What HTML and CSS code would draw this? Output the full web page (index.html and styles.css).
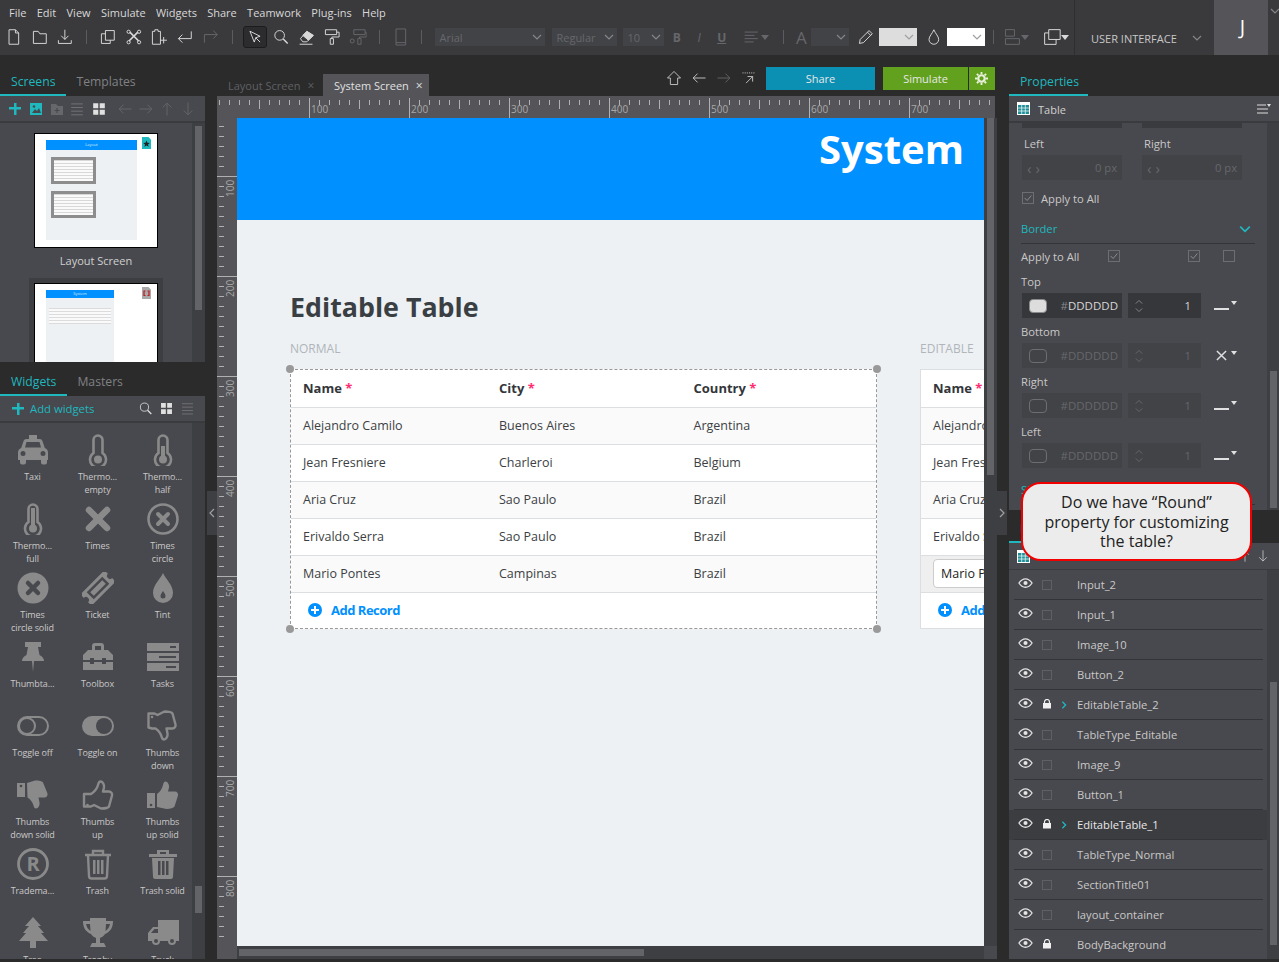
FILE: index.html
```html
<!DOCTYPE html>
<html lang="en">
<head>
    <meta charset="UTF-8">
    <title>System Screen</title>
    <link rel="stylesheet" href="styles.css">
</head>
<body>
<svg class="sprite" xmlns="http://www.w3.org/2000/svg">
    <!-- toolbar icons -->
    <symbol id="t-new" viewBox="0 0 22 22"><path d="M5 2h8l4 4v14H5zM13 2v4h4"/></symbol>
    <symbol id="t-open" viewBox="0 0 22 22"><path d="M3 4h6l2 3h8v12H3z"/></symbol>
    <symbol id="t-save" viewBox="0 0 22 22"><path d="M11 2v12M6.500 9.500l4.500 4.500 4.500-4.500M3 15v4h16v-4"/></symbol>
    <symbol id="t-copy" viewBox="0 0 22 22"><path d="M8 3h11v12H8zM8 7H3v12h11v-4"/></symbol>
    <symbol id="t-cut" viewBox="0 0 22 22"><path d="M6 5l11 11M16 5L5 16" stroke-width="2"/><circle cx="4.500" cy="4.500" r="2"/><circle cx="17.500" cy="4.500" r="2"/><circle cx="4.500" cy="17.500" r="2"/><circle cx="17.500" cy="17.500" r="2"/></symbol>
    <symbol id="t-paste" viewBox="0 0 22 22"><path d="M3 4h3V2h4v2h3v16H3zM13 15h8M17 11v8"/></symbol>
    <symbol id="t-undo" viewBox="0 0 22 22"><path d="M19 4v9H3M8 8l-5 5 5 5"/></symbol>
    <symbol id="t-redo" viewBox="0 0 22 22"><path d="M3 18V8h16M14 3l5 5-5 5"/></symbol>
    <symbol id="t-pointer" viewBox="0 0 22 22"><path d="M4 3l14 7-6 2-2 6zM12 12l6 6"/></symbol>
    <symbol id="t-search" viewBox="0 0 22 22"><circle cx="9.500" cy="9" r="6"/><path d="M14 13.500l5.500 5.500" stroke-width="1.800"/></symbol>
    <symbol id="t-eraser" viewBox="0 0 22 22"><path d="M3 13l8-9 8 5-8 8H6zM2 20h16"/><path d="M11 4l8 5-6 6-7-6z" fill="currentColor"/></symbol>
    <symbol id="t-roller" viewBox="0 0 22 22"><path d="M3 2h14v6H3zM17 5h3v6h-9v2M9 13h4v7H9z"/></symbol>
    <symbol id="t-roller-gear" viewBox="0 0 22 22"><path d="M6 2h14v6H6zM20 5h1.500v6H13v2M11 13h4v7h-4z"/><circle cx="4" cy="16" r="2.500"/></symbol>
    <symbol id="t-device" viewBox="0 0 22 22"><path d="M5 1h12v20H5zM5 18h12"/></symbol>
    <symbol id="t-align" viewBox="0 0 22 22"><path d="M2 5h16M2 9h12M2 13h16M2 17h11"/></symbol>
    <symbol id="t-pen" viewBox="0 0 22 22"><path d="M3 19l1-5L15 3l4 4L8 18zM13 5l4 4"/></symbol>
    <symbol id="t-drop" viewBox="0 0 22 22"><path d="M11 2c2 5 6 8 6 12a6 6 0 0 1-12 0c0-4 4-7 6-12z"/></symbol>
    <symbol id="t-dist" viewBox="0 0 22 22"><path d="M3 2h11v8H3zM3 13h17v7H3z"/></symbol>
    <symbol id="t-layers" viewBox="0 0 22 22"><path d="M7 2h14v12H7zM7 6H2v14h14v-6"/></symbol>
    <symbol id="t-home" viewBox="0 0 22 22"><path d="M11 2l9 9h-4v9H6v-9H2z"/></symbol>
    <symbol id="t-back" viewBox="0 0 22 22"><path d="M20 11H3M9 5l-6 6 6 6"/></symbol>
    <symbol id="t-forward" viewBox="0 0 22 22"><path d="M2 11h17M13 5l6 6-6 6"/></symbol>
    <symbol id="t-up" viewBox="0 0 22 22"><path d="M11 20V3M5 9l6-6 6 6"/></symbol>
    <symbol id="t-down" viewBox="0 0 22 22"><path d="M11 2v17M5 13l6 6 6-6"/></symbol>
    <symbol id="t-exit" viewBox="0 0 22 22"><path d="M2 4h18" stroke-dasharray="1.500 1.500"/><path d="M7 18l9-9M9 9h7v7"/></symbol>
    <symbol id="t-list" viewBox="0 0 22 22"><path d="M3 4h16M3 9h16M3 14h16M3 19h16"/></symbol>
    <symbol id="t-grid" viewBox="0 0 22 22"><path d="M3 3h7v7H3zM12 3h7v7h-7zM3 12h7v7H3zM12 12h7v7h-7z" fill="currentColor" stroke="none"/></symbol>
    <symbol id="t-chevron" viewBox="0 0 10 10"><path d="M1 3l4 4 4-4"/></symbol>
    <symbol id="t-check" viewBox="0 0 12 12"><path d="M2 6l3 3 5-6"/></symbol>
    <symbol id="t-table" viewBox="0 0 13 13"><path d="M0 0h13v13H0z" fill="#fff" stroke="none"/><path d="M1 3h11v9H1z" fill="#1e8f98" stroke="none"/><path d="M1 6h11M1 9h11M4.700 3v9M8.300 3v9" stroke="#fff" stroke-width=".7"/></symbol>
    <symbol id="t-eye" viewBox="0 0 16 12"><path d="M1 6c2-3 4.500-4.500 7-4.500S13 3 15 6c-2 3-4.500 4.500-7 4.500S3 9 1 6z" stroke-width="1.400"/><circle cx="8" cy="6" r="2.200" fill="currentColor" stroke="none"/></symbol>
    <symbol id="t-lock" viewBox="0 0 10 10"><path d="M2.500 4V3a2.500 2.500 0 0 1 5 0v1" stroke-width="1.200"/><path d="M1 4h8v5.500H1z" fill="currentColor" stroke="none"/></symbol>

    <!-- widget icons, drawn solid -->
    <symbol id="w-taxi" viewBox="0 0 32 32"><path fill-rule="evenodd" d="M12 1h8v4h2.500c1.500 0 2.600.9 3 2.200L27.800 14c2 .8 3.200 2.400 3.200 4.500V26h-1v2.500a2 2 0 0 1-2 2h-2a2 2 0 0 1-2-2V26H9v2.500a2 2 0 0 1-2 2H5a2 2 0 0 1-2-2V26H1v-7.500C1 16.400 2.200 14.800 4.200 14L6.500 7.200C7 5.900 8 5 9.500 5H12zM9.500 8L8 13.500h16L22.500 8zM6 17a2.500 2.500 0 1 0 0 5 2.500 2.500 0 0 0 0-5zm20 0a2.500 2.500 0 1 0 0 5 2.500 2.500 0 0 0 0-5z"/></symbol>
    <symbol id="w-thermo" viewBox="0 0 32 32"><path d="M11.500 19V6a4.500 4.500 0 0 1 9 0v13a8 8 0 1 1-9 0z" fill="none" stroke="currentColor" stroke-width="2.600"/><circle cx="16" cy="25.500" r="4"/></symbol>
    <symbol id="w-thermo-half" viewBox="0 0 32 32"><path d="M11.500 19V6a4.500 4.500 0 0 1 9 0v13a8 8 0 1 1-9 0z" fill="none" stroke="currentColor" stroke-width="2.600"/><circle cx="16" cy="25.500" r="4"/><path d="M14 12h4v12h-4z"/></symbol>
    <symbol id="w-thermo-full" viewBox="0 0 32 32"><path d="M11.500 19V6a4.500 4.500 0 0 1 9 0v13a8 8 0 1 1-9 0z" fill="none" stroke="currentColor" stroke-width="2.600"/><circle cx="16" cy="25.500" r="4"/><path d="M14 5h4v19h-4z"/></symbol>
    <symbol id="w-times" viewBox="0 0 32 32"><path d="M7 7l18 18M25 7L7 25" fill="none" stroke="currentColor" stroke-width="6.500" stroke-linecap="round"/></symbol>
    <symbol id="w-times-circle" viewBox="0 0 32 32"><circle cx="16" cy="16" r="14.500" fill="none" stroke="currentColor" stroke-width="2.600"/><path d="M11 11l10 10M21 11L11 21" fill="none" stroke="currentColor" stroke-width="4" stroke-linecap="round"/></symbol>
    <symbol id="w-times-solid" viewBox="0 0 32 32"><circle cx="16" cy="16" r="15.500"/><path d="M11 11l10 10M21 11L11 21" fill="none" stroke="#48494e" stroke-width="4.500" stroke-linecap="round"/></symbol>
    <symbol id="w-ticket" viewBox="0 0 32 32"><g transform="rotate(-45 16 16)"><path fill-rule="evenodd" d="M-1 8h34v5a3 3 0 0 0 0 6v5H-1v-5a3 3 0 0 0 0-6zM5 11v10h22V11z"/><path d="M7.500 13.500h17v5h-17z"/></g></symbol>
    <symbol id="w-tint" viewBox="0 0 32 32"><path d="M16 1c3 6.500 10 12 10 20a10 10 0 0 1-20 0C6 13 13 7.500 16 1z"/><path d="M16 19c1 2 2.500 3 2.500 5a2.500 2.500 0 0 1-5 0c0-2 1.500-3 2.500-5z" fill="#48494e"/></symbol>
    <symbol id="w-thumbtack" viewBox="0 0 32 32"><path d="M8 1h16v5h-3l1.500 8c3 1.500 4.500 3.500 4.500 6H17l-1 11-1-11H5c0-2.500 1.500-4.500 4.500-6L11 6H8z"/></symbol>
    <symbol id="w-toolbox" viewBox="0 0 32 32"><path fill-rule="evenodd" d="M10 9V5a3 3 0 0 1 3-3h6a3 3 0 0 1 3 3v4h4l5 5v5h-7v-2h-4v2h-8v-2H8v2H1v-5l5-5zm3 0h6V5h-6zM1 21h7v2h4v-2h8v2h4v-2h7v8H1z"/></symbol>
    <symbol id="w-tasks" viewBox="0 0 32 32"><path fill-rule="evenodd" d="M0 2h32v8H0zM23 5v2h6V5zM0 12h32v8H0zM12 15v2h17v-2zM0 22h32v8H0zM19 25v2h10v-2z"/></symbol>
    <symbol id="w-toggle-off" viewBox="0 0 32 32"><rect x="1" y="7" width="30" height="18" rx="9" fill="none" stroke="currentColor" stroke-width="2"/><circle cx="10" cy="16" r="8" fill="none" stroke="currentColor" stroke-width="2"/></symbol>
    <symbol id="w-toggle-on" viewBox="0 0 32 32"><rect x="0" y="6" width="32" height="20" rx="10"/><circle cx="22" cy="16" r="8" fill="#48494e"/></symbol>
    <symbol id="w-thumb-down" viewBox="0 0 32 32"><path d="M1.500 3.500h6l3 1.500 7-3.500c4 0 7 .5 8 2l3 11c.5 2-1 4-3 4h-6l1 5c.500 3-1.500 6-3.500 6-1.500 0-2-1-2.500-3-1-3.500-3-6-6-8H5l-3.500-1z" fill="none" stroke="currentColor" stroke-width="2.400" stroke-linejoin="round"/><circle cx="5" cy="7" r="1.300"/></symbol>
    <symbol id="w-thumb-down-solid" viewBox="0 0 32 32"><path d="M0 4h8v14H0zM10 4l8-2.500c4 0 7 .5 8 2l4.500 11c.5 2-1 4-3 4h-6l1 5c.500 3-1.500 6-3.500 6-1.500 0-2-1-2.500-3-1-3.500-3-6-6-8z"/><circle cx="4" cy="7" r="1.300" fill="#48494e"/></symbol>
    <symbol id="w-thumb-up" viewBox="0 0 32 32"><path d="M2 15h7c3-2 6-5 7-9 .5-2 1-3.500 2.500-3.500 2 0 4 3 3.500 6l-1 4h6c2 0 3.500 2 3 4l-3 11c-1 1.500-4 2-8 2l-7-3.500-3 1.500H2z" fill="none" stroke="currentColor" stroke-width="2.400" stroke-linejoin="round"/><circle cx="5.500" cy="26" r="1.300"/></symbol>
    <symbol id="w-thumb-up-solid" viewBox="0 0 32 32"><path d="M0 14h8v15H0zM10 15c3-2 5-5 6-9 .5-2 1-3.500 2.500-3.500 2 0 4 3 3.500 6l-1 4h7c2 0 3.500 2 3 4l-3.500 11c-1 1.500-4 2.500-8 2.500L10 28z"/><circle cx="4" cy="26" r="1.300" fill="#48494e"/></symbol>
    <symbol id="w-trademark" viewBox="0 0 32 32"><circle cx="16" cy="16" r="14.500" fill="none" stroke="currentColor" stroke-width="2.800"/><text x="16" y="23" text-anchor="middle" font-family="Open Sans" font-weight="700" font-size="20">R</text></symbol>
    <symbol id="w-trash" viewBox="0 0 32 32"><path d="M3 7h26M11 7V3h10v4M6 7l1 21c0 1.500 1 2.500 2.500 2.500h13c1.500 0 2.500-1 2.500-2.500l1-21" fill="none" stroke="currentColor" stroke-width="2.400"/><path d="M11 12h2.500v14H11zM15 12h2.500v14H15zM19 12h2.500v14H19z"/></symbol>
    <symbol id="w-trash-solid" viewBox="0 0 32 32"><path d="M2 6h8V2h12v4h8v3H2zM13 4v2h6V4z"/><path fill-rule="evenodd" d="M5 10h22l-1 19c0 1-1 2-2 2H8c-1 0-2-1-2-2zM11 13v14h2.500V13zM15 13v14h2.500V13zM19 13v14h2.500V13z"/></symbol>
    <symbol id="w-tree" viewBox="0 0 32 32"><path d="M16 0l8 9h-3l6 7h-3l7 8H19v7h-6v-7H2l7-8H6l6-7H8z"/></symbol>
    <symbol id="w-trophy" viewBox="0 0 32 32"><path d="M8 1h16v3h7c0 7-3 11-8 13-1 2-3 3-5 4v5h4l2 4H8l2-4h4v-5c-2-1-4-2-5-4C4 15 1 11 1 4h7zM4 7c.5 3 2 5 4.500 7L8 7zm24 0h-4l-.500 7c2.500-2 4-4 4.500-7z"/></symbol>
    <symbol id="w-truck" viewBox="0 0 32 32"><path fill-rule="evenodd" d="M11 3h21v21h-3a4 4 0 0 1-8 0h-8a4 4 0 0 1-8 0H1v-8l5-6h5zM4 16h7v-4H7.500zM9 22a2 2 0 1 0 0 4 2 2 0 0 0 0-4zm16 0a2 2 0 1 0 0 4 2 2 0 0 0 0-4z"/></symbol>
</svg>

<header class="topbar">
    <div class="topbar-main">
        <nav class="menu">
            <span>File</span><span>Edit</span><span>View</span><span>Simulate</span><span>Widgets</span><span>Share</span><span>Teamwork</span><span>Plug-ins</span><span>Help</span>
        </nav>
        <div class="tools">
            <svg class="tool"><use href="#t-new"/></svg>
            <svg class="tool"><use href="#t-open"/></svg>
            <svg class="tool"><use href="#t-save"/></svg>
            <i class="sep"></i>
            <svg class="tool"><use href="#t-copy"/></svg>
            <svg class="tool"><use href="#t-cut"/></svg>
            <svg class="tool"><use href="#t-paste"/></svg>
            <svg class="tool"><use href="#t-undo"/></svg>
            <svg class="tool off"><use href="#t-redo"/></svg>
            <i class="sep"></i>
            <svg class="tool active"><use href="#t-pointer"/></svg>
            <svg class="tool"><use href="#t-search"/></svg>
            <svg class="tool"><use href="#t-eraser"/></svg>
            <svg class="tool"><use href="#t-roller"/></svg>
            <svg class="tool off"><use href="#t-roller-gear"/></svg>
            <i class="sep"></i>
            <svg class="tool off"><use href="#t-device"/></svg>
            <i class="sep"></i>
            <div class="select select-font">Arial<svg class="chev"><use href="#t-chevron"/></svg></div>
            <div class="select select-weight">Regular<svg class="chev"><use href="#t-chevron"/></svg></div>
            <div class="select select-size">10<svg class="chev"><use href="#t-chevron"/></svg></div>
            <b class="fmt fmt-b">B</b>
            <em class="fmt">I</em>
            <u class="fmt">U</u>
            <svg class="tool off tool-narrow tool-align"><use href="#t-align"/></svg><i class="caret off caret-align"></i>
            <i class="sep"></i>
            <span class="big-a">A</span>
            <div class="select select-num"><svg class="chev"><use href="#t-chevron"/></svg></div>
            <svg class="tool tool-pen"><use href="#t-pen"/></svg>
            <div class="select swatch swatch-grey"><svg class="chev"><use href="#t-chevron"/></svg></div>
            <svg class="tool tool-drop"><use href="#t-drop"/></svg>
            <div class="select swatch swatch-white"><svg class="chev"><use href="#t-chevron"/></svg></div>
            <i class="sep"></i>
            <svg class="tool off tool-narrow"><use href="#t-dist"/></svg><i class="caret off"></i>
            <svg class="tool tool-narrow tool-layers"><use href="#t-layers"/></svg><i class="caret"></i>
        </div>
    </div>
    <div class="project">USER INTERFACE<svg class="chev"><use href="#t-chevron"/></svg></div>
    <div class="avatar">J</div>
    <svg class="chev account-chev"><use href="#t-chevron"/></svg>
</header>

<main class="workspace">
    <!-- left column -->
    <aside class="left">
        <div class="tabs">
            <span class="tab on">Screens</span><span class="tab">Templates</span>
        </div>
        <section class="panel screens">
            <div class="panel-bar">
                <svg class="bar-icon teal img-icon" viewBox="0 0 14 14"><path d="M1 1h12v12H1z"/><path d="M3 11l3-4 2 2 2-3 2 5z" fill="#48494e"/><circle cx="5" cy="4.500" r="1.300" fill="#48494e"/></svg>
                <svg class="bar-icon dim-fill" viewBox="0 0 14 14"><path d="M1 2h5l2 2h5v9H1z"/><path d="M7 6v5M4.500 8.500h5" stroke="#48494e" fill="none"/></svg>
                <svg class="bar-icon-line dim"><use href="#t-list"/></svg>
                <svg class="bar-icon-line light"><use href="#t-grid"/></svg>
                <svg class="bar-arrow first-arrow"><use href="#t-back"/></svg>
                <svg class="bar-arrow"><use href="#t-forward"/></svg>
                <svg class="bar-arrow"><use href="#t-up"/></svg>
                <svg class="bar-arrow"><use href="#t-down"/></svg>
            </div>
            <div class="panel-scroll">
                <div class="screen-list">
                    <div class="screen-item">
                        <div class="thumb">
                            <div class="mini-page mini-layout">
                                <div class="mini-head">Layout</div>
                                <div class="mini-box"></div>
                                <div class="mini-box"></div>
                            </div>
                            <svg class="badge" viewBox="0 0 9 12"><path d="M0 0h6.500L9 2.500V12H0z" fill="#1fb8bf"/><path d="M4.500 3.500l1 2.300 2.300.2-1.800 1.500.6 2.300-2.100-1.300-2.100 1.300.6-2.300L1.200 6l2.300-.2z" fill="#222"/></svg>
                        </div>
                        <div class="screen-name">Layout Screen</div>
                    </div>
                    <div class="screen-item current">
                        <div class="thumb">
                            <div class="mini-page mini-system">
                                <div class="mini-head">System</div>
                                <div class="mini-table"></div>
                            </div>
                            <svg class="badge" viewBox="0 0 9 12"><path d="M0 0h6.500L9 2.500V12H0z" fill="#a9a9a9"/><path d="M3.500 4H2v4.500h1.500M5.500 4H7v4.500H5.500" fill="none" stroke="#c2181f"/></svg>
                        </div>
                    </div>
                </div>
                <div class="track"><div class="thumb-bar screens-bar"></div></div>
            </div>
        </section>
        <div class="tabs">
            <span class="tab on">Widgets</span><span class="tab">Masters</span>
        </div>
        <section class="panel widgets">
            <div class="panel-bar widgets-bar">
                <span class="add-label">Add widgets</span>
                <svg class="bar-icon-line light"><use href="#t-search"/></svg>
                <svg class="bar-icon-line light"><use href="#t-grid"/></svg>
                <svg class="bar-icon-line dim"><use href="#t-list"/></svg>
            </div>
            <div class="panel-scroll">
                <div class="widget-grid">
                    <div class="widget"><svg><use href="#w-taxi"/></svg><span>Taxi</span></div>
                    <div class="widget"><svg><use href="#w-thermo"/></svg><span>Thermo...<br>empty</span></div>
                    <div class="widget"><svg><use href="#w-thermo-half"/></svg><span>Thermo...<br>half</span></div>
                    <div class="widget"><svg><use href="#w-thermo-full"/></svg><span>Thermo...<br>full</span></div>
                    <div class="widget"><svg><use href="#w-times"/></svg><span>Times</span></div>
                    <div class="widget"><svg><use href="#w-times-circle"/></svg><span>Times<br>circle</span></div>
                    <div class="widget"><svg><use href="#w-times-solid"/></svg><span>Times<br>circle solid</span></div>
                    <div class="widget"><svg><use href="#w-ticket"/></svg><span>Ticket</span></div>
                    <div class="widget"><svg><use href="#w-tint"/></svg><span>Tint</span></div>
                    <div class="widget"><svg><use href="#w-thumbtack"/></svg><span>Thumbta...</span></div>
                    <div class="widget"><svg><use href="#w-toolbox"/></svg><span>Toolbox</span></div>
                    <div class="widget"><svg><use href="#w-tasks"/></svg><span>Tasks</span></div>
                    <div class="widget"><svg><use href="#w-toggle-off"/></svg><span>Toggle off</span></div>
                    <div class="widget"><svg><use href="#w-toggle-on"/></svg><span>Toggle on</span></div>
                    <div class="widget"><svg><use href="#w-thumb-down"/></svg><span>Thumbs<br>down</span></div>
                    <div class="widget"><svg><use href="#w-thumb-down-solid"/></svg><span>Thumbs<br>down solid</span></div>
                    <div class="widget"><svg><use href="#w-thumb-up"/></svg><span>Thumbs<br>up</span></div>
                    <div class="widget"><svg><use href="#w-thumb-up-solid"/></svg><span>Thumbs<br>up solid</span></div>
                    <div class="widget"><svg><use href="#w-trademark"/></svg><span>Tradema...</span></div>
                    <div class="widget"><svg><use href="#w-trash"/></svg><span>Trash</span></div>
                    <div class="widget"><svg><use href="#w-trash-solid"/></svg><span>Trash solid</span></div>
                    <div class="widget"><svg><use href="#w-tree"/></svg><span>Tree</span></div>
                    <div class="widget"><svg><use href="#w-trophy"/></svg><span>Trophy</span></div>
                    <div class="widget"><svg><use href="#w-truck"/></svg><span>Truck</span></div>
                </div>
                <div class="track"><div class="thumb-bar widgets-thumb"></div></div>
            </div>
        </section>
    </aside>

    <!-- center column -->
    <section class="center">
        <div class="center-top">
            <div class="doc-tab">Layout Screen<span class="x">×</span></div>
            <div class="doc-tab on">System Screen<span class="x">×</span></div>
            <div class="nav-icons">
                <svg class="nav-icon"><use href="#t-home"/></svg>
                <svg class="nav-icon"><use href="#t-back"/></svg>
                <svg class="nav-icon off"><use href="#t-forward"/></svg>
                <svg class="nav-icon"><use href="#t-exit"/></svg>
            </div>
            <div class="btn btn-share">Share</div>
            <div class="btn btn-sim">Simulate</div>
            <div class="btn btn-gear">
                <svg viewBox="0 0 14 14"><circle cx="7" cy="7" r="3.500" fill="none" stroke="#e8f0dc" stroke-width="2.400"/><path d="M7 0v14M0 7h14M2 2l10 10M12 2L2 12" stroke="#e8f0dc" stroke-width="2" stroke-dasharray="2.400 9.200 2.400 0"/></svg>
            </div>
        </div>
        <div class="ruler-x">
            <span>100</span><span>200</span><span>300</span><span>400</span><span>500</span><span>600</span><span>700</span>
        </div>
        <div class="stage">
            <div class="ruler-y">
                <span>100</span><span>200</span><span>300</span><span>400</span><span>500</span><span>600</span><span>700</span><span>800</span>
            </div>
            <div class="canvas">
                <div class="page-head">System</div>
                <h1>Editable Table</h1>
                <div class="tables">
                    <div class="table-block">
                        <div class="caption">NORMAL</div>
                        <div class="table-wrap selected">
                            <table>
                                <thead><tr><th>Name <em>*</em></th><th>City <em>*</em></th><th>Country <em>*</em></th></tr></thead>
                                <tbody>
                                    <tr><td>Alejandro Camilo</td><td>Buenos Aires</td><td>Argentina</td></tr>
                                    <tr><td>Jean Fresniere</td><td>Charleroi</td><td>Belgium</td></tr>
                                    <tr><td>Aria Cruz</td><td>Sao Paulo</td><td>Brazil</td></tr>
                                    <tr><td>Erivaldo Serra</td><td>Sao Paulo</td><td>Brazil</td></tr>
                                    <tr><td>Mario Pontes</td><td>Campinas</td><td>Brazil</td></tr>
                                    <tr class="add-row"><td colspan="3"><span class="add-record"><i class="add-dot"></i>Add Record</span></td></tr>
                                </tbody>
                            </table>
                            <i class="handle tl"></i><i class="handle tr"></i><i class="handle bl"></i><i class="handle br"></i>
                        </div>
                    </div>
                    <div class="table-block">
                        <div class="caption">EDITABLE</div>
                        <div class="table-wrap editable">
                            <table>
                                <thead><tr><th>Name <em>*</em></th><th>City <em>*</em></th><th>Country <em>*</em></th></tr></thead>
                                <tbody>
                                    <tr><td>Alejandro Camilo</td><td>Buenos Aires</td><td>Argentina</td></tr>
                                    <tr><td>Jean Fresniere</td><td>Charleroi</td><td>Belgium</td></tr>
                                    <tr><td>Aria Cruz</td><td>Sao Paulo</td><td>Brazil</td></tr>
                                    <tr><td>Erivaldo Serra</td><td>Sao Paulo</td><td>Brazil</td></tr>
                                    <tr class="edit-row"><td><span class="edit-input">Mario Pontes</span></td><td>Campinas</td><td>Brazil</td></tr>
                                    <tr class="add-row"><td colspan="3"><span class="add-record"><i class="add-dot"></i>Add Record</span></td></tr>
                                </tbody>
                            </table>
                        </div>
                    </div>
                </div>
            </div>
            <div class="track track-main"><div class="thumb-bar main-bar"></div></div>
        </div>
        <div class="hscroll">
            <div class="ruler-y-end"></div>
            <div class="hscroll-track"><div class="hscroll-thumb"></div></div>
            <div class="hscroll-corner"></div>
        </div>
    </section>

    <!-- right column -->
    <aside class="right">
        <div class="tabs">
            <span class="tab on wide">Properties</span>
        </div>
        <section class="panel props">
            <div class="panel-bar title-bar">
                <svg class="table-icon"><use href="#t-table"/></svg>
                <span class="title">Table</span>
                <svg class="menu-icon" viewBox="0 0 14 10"><path d="M0 1h9M0 5h11M0 9h11" stroke="#ddd" stroke-width="1.200"/><path d="M10 0h4l-2 3z" fill="#ddd" stroke="none"/></svg>
            </div>
            <div class="panel-scroll">
                <div class="prop-body">
                    <div class="two-up stubs"><i></i><i></i></div>
                    <div class="two-up labels"><span>Left</span><span>Right</span></div>
                    <div class="two-up">
                        <div class="px-input"><span class="carets">‹ ›</span><span>0 px</span></div>
                        <div class="px-input"><span class="carets">‹ ›</span><span>0 px</span></div>
                    </div>
                    <label class="apply"><svg class="check"><use href="#t-check"/></svg>Apply to All</label>
                    <div class="group-head">Border<svg class="chev teal-chev"><use href="#t-chevron"/></svg></div>
                    <div class="apply-row">
                        <span>Apply to All</span>
                        <svg class="check c1"><use href="#t-check"/></svg>
                        <svg class="check c2"><use href="#t-check"/></svg>
                        <span class="check c3"></span>
                    </div>
                    <div class="side">
                        <div class="side-label">Top</div>
                        <div class="side-row">
                            <div class="hex"><i class="dot"></i><span><s>#</s>DDDDDD</span></div>
                            <div class="stepper"><span class="spin"><svg class="chev up"><use href="#t-chevron"/></svg><svg class="chev"><use href="#t-chevron"/></svg></span><span>1</span></div>
                            <div class="line-style"><i></i><b></b></div>
                        </div>
                    </div>
                    <div class="side disabled">
                        <div class="side-label">Bottom</div>
                        <div class="side-row">
                            <div class="hex"><i class="dot"></i><span><s>#</s>DDDDDD</span></div>
                            <div class="stepper"><span class="spin"><svg class="chev up"><use href="#t-chevron"/></svg><svg class="chev"><use href="#t-chevron"/></svg></span><span>1</span></div>
                            <div class="line-style"><svg class="no-line" viewBox="0 0 12 12"><path d="M1 1l10 10M11 1L1 11"/></svg><b></b></div>
                        </div>
                    </div>
                    <div class="side disabled">
                        <div class="side-label">Right</div>
                        <div class="side-row">
                            <div class="hex"><i class="dot"></i><span><s>#</s>DDDDDD</span></div>
                            <div class="stepper"><span class="spin"><svg class="chev up"><use href="#t-chevron"/></svg><svg class="chev"><use href="#t-chevron"/></svg></span><span>1</span></div>
                            <div class="line-style"><i></i><b></b></div>
                        </div>
                    </div>
                    <div class="side disabled">
                        <div class="side-label">Left</div>
                        <div class="side-row">
                            <div class="hex"><i class="dot"></i><span><s>#</s>DDDDDD</span></div>
                            <div class="stepper"><span class="spin"><svg class="chev up"><use href="#t-chevron"/></svg><svg class="chev"><use href="#t-chevron"/></svg></span><span>1</span></div>
                            <div class="line-style"><i></i><b></b></div>
                        </div>
                    </div>
                    <div class="group-head shadow-head">Shadow</div>
                </div>
                <div class="track"><div class="thumb-bar props-bar"></div></div>
            </div>
        </section>
        <div class="tabs layers-tabs">
            <span class="tab on wide">Layers</span>
        </div>
        <section class="panel layers">
            <div class="panel-bar title-bar layers-title">
                <svg class="table-icon"><use href="#t-table"/></svg>
                <span class="title">Table</span>
                <svg class="small-arrow"><use href="#t-up"/></svg>
                <svg class="small-arrow"><use href="#t-down"/></svg>
            </div>
            <div class="panel-scroll">
                <ul class="layer-list">
                    <li><svg class="eye"><use href="#t-eye"/></svg><i class="box"></i><i class="exp"></i>Input_2</li>
                    <li><svg class="eye"><use href="#t-eye"/></svg><i class="box"></i><i class="exp"></i>Input_1</li>
                    <li><svg class="eye"><use href="#t-eye"/></svg><i class="box"></i><i class="exp"></i>Image_10</li>
                    <li><svg class="eye"><use href="#t-eye"/></svg><i class="box"></i><i class="exp"></i>Button_2</li>
                    <li><svg class="eye"><use href="#t-eye"/></svg><svg class="lock"><use href="#t-lock"/></svg><svg class="exp arrow" viewBox="0 0 10 10"><path d="M3 1l4 4-4 4"/></svg>EditableTable_2</li>
                    <li><svg class="eye"><use href="#t-eye"/></svg><i class="box"></i><i class="exp"></i>TableType_Editable</li>
                    <li><svg class="eye"><use href="#t-eye"/></svg><i class="box"></i><i class="exp"></i>Image_9</li>
                    <li><svg class="eye"><use href="#t-eye"/></svg><i class="box"></i><i class="exp"></i>Button_1</li>
                    <li class="picked"><svg class="eye"><use href="#t-eye"/></svg><svg class="lock"><use href="#t-lock"/></svg><svg class="exp arrow" viewBox="0 0 10 10"><path d="M3 1l4 4-4 4"/></svg>EditableTable_1</li>
                    <li><svg class="eye"><use href="#t-eye"/></svg><i class="box"></i><i class="exp"></i>TableType_Normal</li>
                    <li><svg class="eye"><use href="#t-eye"/></svg><i class="box"></i><i class="exp"></i>SectionTitle01</li>
                    <li><svg class="eye"><use href="#t-eye"/></svg><i class="box"></i><i class="exp"></i>layout_container</li>
                    <li><svg class="eye"><use href="#t-eye"/></svg><svg class="lock"><use href="#t-lock"/></svg><i class="exp"></i>BodyBackground</li>
                </ul>
                <div class="track"><div class="thumb-bar layers-bar"></div></div>
            </div>
        </section>
    </aside>

    <!-- collapse handles and comment sit over the columns -->
    <div class="collapse collapse-left"><svg class="chev-side" viewBox="0 0 10 10"><path d="M7 1L3 5l4 4"/></svg></div>
    <div class="collapse collapse-right"><svg class="chev-side" viewBox="0 0 10 10"><path d="M3 1l4 4-4 4"/></svg></div>
    <div class="comment">Do we have “Round” property for customizing the table?</div>
</main>
</body>
</html>
```

FILE: styles.css
```css
* {
    box-sizing: border-box;
}

html, body {
    margin: 0;
    height: 100%;
}

body {
    width: 1279px;
    height: 962px;
    overflow: hidden;
    background: #2b2b2b;
    color: #d0d0d0;
    font-family: "Open Sans", sans-serif;
    font-size: 11px;
    display: flex;
    flex-direction: column;
}

.sprite {
    display: none;
}

svg {
    fill: none;
    stroke: currentColor;
    stroke-width: 1.2;
    display: block;
}

.chev {
    width: 10px;
    height: 10px;
    color: #85868a;
    flex: none;
}

/* top bar */
.topbar {
    height: 55px;
    flex: none;
    background: #3a3a3d;
    display: flex;
}

.topbar-main {
    width: 1075px;
    flex: none;
    border-right: 1px solid #2e2e30;
}

.menu {
    display: flex;
    gap: 10.300px;
    height: 25px;
    padding: 5px 0 0 9px;
    color: #d8d8d8;
    font-size: 11px;
    line-height: 15px;
}

.tools {
    display: flex;
    align-items: center;
    height: 24px;
    padding-left: 1px;
    color: #d8d8d8;
}

.tool {
    width: 25.700px;
    height: 20px;
    padding: 1px 4px;
    flex: none;
}

.tool.off {
    color: #66676b;
}

.tool.active {
    color: #e8e8e8;
    background: #2c2c2e;
    border: 1px solid #1c1c1e;
    border-radius: 3px;
    width: 24px;
    height: 22px;
    margin: 0 1px 0 2.500px;
    padding: 2px;
}

.tool-narrow {
    width: 20px;
    padding: 1px;
}

.tool-align {
    margin-left: 9px;
}

.caret-align {
    margin-right: 6px;
}

.tool-layers {
    margin-left: 13px;
}

.tool-pen {
    margin-left: 4px;
}

.tool-drop {
    margin-left: 4px;
}

.sep {
    width: 1px;
    height: 14px;
    margin: 0 8px;
    background: #5b5c60;
    flex: none;
}

.caret {
    width: 0;
    height: 0;
    border-left: 4px solid transparent;
    border-right: 4px solid transparent;
    border-top: 5px solid #d8d8d8;
    margin-left: -1px;
    flex: none;
}

.caret.off {
    border-top-color: #66676b;
}

.select {
    display: flex;
    align-items: center;
    justify-content: space-between;
    height: 18px;
    padding: 0 3px 0 4px;
    margin-right: 6px;
    background: #424347;
    color: #66676b;
    flex: none;
}

.select-font {
    width: 110px;
    margin-left: 5px;
    margin-right: 7px;
}

.select-weight {
    width: 65px;
}

.select-size {
    width: 41px;
    margin-right: 1px;
}

.select-num {
    width: 38px;
    justify-content: flex-end;
    margin-right: 0;
}

.fmt {
    width: 22.500px;
    flex: none;
    text-align: center;
    color: #66676b;
    font-size: 12px;
    font-weight: bold;
}

em.fmt {
    font-weight: normal;
}

.big-a {
    font-size: 17px;
    width: 19.500px;
    padding-left: 4px;
    color: #66676b;
    flex: none;
}

.swatch {
    width: 38px;
    justify-content: flex-end;
    margin-right: 0;
}

.swatch-grey {
    background: #dddddd;
}

.swatch-white {
    background: #ffffff;
}

.swatch .chev {
    color: #a0a0a0;
}

.project {
    width: 139px;
    flex: none;
    display: flex;
    align-items: center;
    justify-content: space-between;
    padding: 21px 12px 0 16px;
    color: #c8c8c8;
}

.avatar {
    width: 54px;
    flex: none;
    background: #545459;
    color: #fff;
    font-size: 20px;
    text-align: center;
    line-height: 54px;
    padding-left: 3px;
}

.account-chev {
    margin: 6px 0 0 2px;
}

/* columns */
.workspace {
    flex: 1;
    min-height: 0;
    display: flex;
    padding-bottom: 3px;
    position: relative;
}

.left {
    width: 205px;
    flex: none;
    display: flex;
    flex-direction: column;
}

.center {
    width: 804px;
    flex: none;
    padding: 0 12px;
    display: flex;
    flex-direction: column;
}

.right {
    width: 270px;
    flex: none;
    display: flex;
    flex-direction: column;
}

.tabs {
    height: 41px;
    flex: none;
    display: flex;
    align-items: flex-end;
    font-size: 12.200px;
}

.left .screens + .tabs {
    height: 34px;
}

.tab {
    height: 26px;
    padding: 0 11px;
    line-height: 24px;
    color: #808185;
    border-bottom: 2px solid transparent;
}

.tab + .tab {
    margin-left: -1px;
}

.tab.on {
    color: #1fb8bf;
    border-bottom-color: #1fb8bf;
}

.tab.on.wide {
    width: 79px;
}

.panel {
    background: #48494e;
    display: flex;
    flex-direction: column;
    min-height: 0;
}

.screens {
    height: 266px;
    flex: none;
}

.widgets {
    flex: 1;
}

.panel-bar {
    height: 27px;
    flex: none;
    display: flex;
    align-items: center;
    border-bottom: 2px solid #3a3b3f;
    padding-left: 6px;
}

.panel-scroll {
    flex: 1;
    min-height: 0;
    display: flex;
    overflow: hidden;
}

.track {
    width: 13px;
    flex: none;
    background: #3e3f43;
    padding: 3px 3px 0;
}

.thumb-bar {
    background: #636468;
    height: 100%;
}

/* screen list */
.bar-icon {
    width: 14px;
    height: 14px;
    stroke: none;
    fill: currentColor;
    margin-left: 8px;
}

.bar-icon.teal {
    color: #1fb8bf;
}

.bar-icon.dim-fill {
    color: #66676b;
    margin-left: 7px;
}

.bar-icon-line {
    width: 16px;
    height: 16px;
    margin-left: 5px;
}

.bar-icon-line.light {
    margin-left: 6px;
}

.dim {
    color: #77787c;
}

.light {
    color: #e0e0e0;
}

.bar-arrow {
    width: 16px;
    height: 16px;
    margin-left: 5px;
    color: #66676b;
}

.first-arrow {
    margin-left: 10px;
}

.screens .panel-bar::before,
.widgets-bar::before {
    content: "";
    width: 12px;
    height: 12px;
    margin-left: 3px;
    flex: none;
    background:
        linear-gradient(#1fb8bf, #1fb8bf) center / 12px 2.500px no-repeat,
        linear-gradient(#1fb8bf, #1fb8bf) center / 2.500px 12px no-repeat;
}

.screen-list {
    flex: 1;
    min-width: 0;
    padding: 10px 0 0 29px;
}

.screen-item {
    width: 134px;
    padding: 0 5px;
}

.screen-item.current {
    background: #3d3e42;
    padding-top: 5px;
    height: 90px;
}

.thumb {
    width: 124px;
    height: 115px;
    background: #fff;
    border: 1px solid #000;
    position: relative;
    padding: 6px 0 0 11px;
    overflow: hidden;
}

.screen-name {
    text-align: center;
    color: #d0d0d0;
    height: 30px;
    line-height: 26px;
    font-size: 11px;
}

.badge {
    position: absolute;
    top: 3px;
    right: 6px;
    width: 9px;
    height: 12px;
    stroke: none;
}

.mini-page {
    background: #eef1f4;
    height: 100px;
}

.mini-layout {
    width: 91px;
}

.mini-system {
    width: 68px;
}

.mini-head {
    background: #0090ff;
    color: #d8eeff;
    height: 10px;
    font-size: 4px;
    line-height: 9px;
    text-align: center;
    margin-bottom: 6px;
}

.mini-system .mini-head {
    height: 8px;
    line-height: 8px;
    margin-bottom: 10px;
}

.mini-box {
    width: 45px;
    height: 27px;
    margin: 7px 0 5px 5px;
    border: 3px solid #8d8d8d;
    background: repeating-linear-gradient(#d8d8d8 0 1px, #fafafa 1px 3px);
}

.mini-table {
    height: 16px;
    margin: 8px 3px;
    background: repeating-linear-gradient(#dcdcdc 0 1px, #fafafa 1px 3px);
}

.screens-bar {
    height: 184px;
}

/* widget grid */
.widgets-bar {
    padding-left: 9px;
}

.add-label {
    color: #1fb8bf;
    font-size: 11.300px;
    margin-left: 6px;
    flex: 1;
}

.widgets-bar .bar-icon-line {
    margin: 0 0 0 6px;
    width: 15px;
    height: 15px;
}

.widgets-bar .bar-icon-line:last-child {
    margin-right: 10px;
}

.widget-grid {
    width: 192px;
    flex: none;
    display: grid;
    grid-template-columns: repeat(3, 65px);
    grid-auto-rows: 69px;
    overflow: hidden;
}

.widget {
    display: flex;
    flex-direction: column;
    align-items: center;
    text-align: center;
    font-size: 9px;
    letter-spacing: -0.1px;
    line-height: 13px;
    color: #c8c8c8;
    white-space: nowrap;
}

.widget svg {
    width: 32px;
    height: 32px;
    flex: none;
    margin: 11px 0 4px;
    color: #8a8a8a;
    fill: currentColor;
    stroke: none;
}

.widgets-thumb {
    height: 27px;
    margin-top: 460px;
}

/* center column */
.center-top {
    height: 41px;
    flex: none;
    display: flex;
    align-items: flex-end;
}

.doc-tab {
    height: 22px;
    width: 106px;
    line-height: 24px;
    padding-left: 11px;
    color: #5f6064;
}

.doc-tab.on {
    background: #545459;
    color: #e0e0e0;
}

.x {
    margin-left: 7px;
    font-size: 12px;
}

.nav-icons {
    display: flex;
    margin: 0 9px 10px 237px;
    gap: 9px;
}

.nav-icon {
    width: 16px;
    height: 16px;
    color: #d0d0d0;
}

.nav-icon.off {
    color: #66676b;
}

.btn {
    height: 23px;
    margin-bottom: 6px;
    color: #e8e8e8;
    text-align: center;
    line-height: 23px;
    flex: none;
}

.btn-share {
    width: 109px;
    background: #0b8fb3;
    margin-right: 8px;
}

.btn-sim {
    width: 85px;
    background: #62a11d;
    margin-right: 1px;
}

.btn-gear {
    width: 26px;
    background: #62a11d;
    padding: 5px 6px;
}

.btn-gear svg {
    width: 13px;
    height: 13px;
}

.ruler-x {
    height: 22px;
    flex: none;
    display: flex;
    padding-left: 92px;
    font-size: 10px;
    color: #a8a8a8;
    overflow: hidden;
    width: 778px;
    background-color: #545459;
    background-image:
        linear-gradient(90deg, #b0b0b0 1px, transparent 1px),
        linear-gradient(90deg, #b0b0b0 1px, transparent 1px),
        linear-gradient(90deg, #b0b0b0 1px, transparent 1px);
    background-repeat: repeat-x;
    background-size: 100px 20px, 100px 9px, 10px 5px;
    background-position: 92px 2px, 42px 4px, 2px 4px;
}

.ruler-x span {
    width: 100px;
    flex: none;
    padding: 4px 0 0 2px;
    line-height: 18px;
}

.stage {
    flex: 1;
    min-height: 0;
    display: flex;
}

.ruler-y {
    width: 20px;
    flex: none;
    background-color: #545459;
    background-image:
        linear-gradient(#b0b0b0 1px, transparent 1px),
        linear-gradient(#b0b0b0 1px, transparent 1px);
    background-repeat: repeat-y;
    background-size: 20px 100px, 5px 10px;
    background-position: 0 58px, 2px 8px;
    padding-top: 59px;
    font-size: 10px;
    color: #a8a8a8;
    overflow: hidden;
}

.ruler-y span {
    display: block;
    height: 100px;
    writing-mode: vertical-rl;
    transform: rotate(180deg);
    text-align: right;
    padding: 0 0 3px 0;
    line-height: 20px;
    margin-left: 3px;
}

.canvas {
    width: 747px;
    flex: none;
    background: #edf1f4;
    overflow: hidden;
    color: #3c3f44;
}

.page-head {
    height: 102px;
    background: #0090ff;
    color: #fff;
    font-size: 40px;
    font-weight: bold;
    text-align: right;
    padding-right: 20px;
    line-height: 62px;
}

h1 {
    margin: 68px 0 0 53px;
    font-size: 26.800px;
    line-height: 38px;
    color: #3a3f44;
}

.tables {
    display: flex;
    gap: 43px;
    margin: 13px 0 0 53px;
    width: 1300px;
}

.table-block {
    width: 587px;
    flex: none;
}

.caption {
    height: 30px;
    line-height: 20px;
    font-size: 12px;
    color: #b0b5ba;
}

.table-wrap {
    position: relative;
    background: #fff;
    border: 1px solid #dcdfe2;
}

.table-wrap.selected {
    border: 1px dashed #999;
}

table {
    width: 100%;
    border-collapse: collapse;
    table-layout: fixed;
    font-size: 12.500px;
}

th, td {
    height: 37px;
    padding: 0 12px;
    text-align: left;
    border-bottom: 1px solid #dcdfe2;
    white-space: nowrap;
    color: #3c3f44;
}

th {
    font-size: 13px;
    font-weight: bold;
    color: #33363a;
}

th:first-child {
    width: 196px;
}

th em {
    color: #ff2d6f;
    font-style: normal;
    font-weight: bold;
}

tbody tr:nth-child(odd) td {
    background: #fafafa;
}

.add-row td,
tbody tr.add-row:nth-child(odd) td {
    height: 36px;
    background: #fff;
    border-bottom: 0;
    padding-left: 17px;
}

.add-record {
    display: flex;
    align-items: center;
    font-size: 13px;
    color: #0090ff;
    font-weight: bold;
    letter-spacing: -0.5px;
}

.add-dot {
    width: 14px;
    height: 14px;
    border-radius: 50%;
    margin-right: 9px;
    background:
        linear-gradient(#fff, #fff) center / 8px 2px no-repeat,
        linear-gradient(#fff, #fff) center / 2px 8px no-repeat,
        #0090ff;
}

.handle {
    position: absolute;
    width: 8px;
    height: 8px;
    border-radius: 50%;
    background: #999;
}

.tl { left: -5px; top: -5px; }
.tr { right: -5px; top: -5px; }
.bl { left: -5px; bottom: -5px; }
.br { right: -5px; bottom: -5px; }

tbody tr.edit-row td {
    background: #efefef;
}

.edit-input {
    display: block;
    height: 29px;
    line-height: 27px;
    padding-left: 7px;
    background: #fff;
    border: 1px solid #ccc;
    border-radius: 4px;
    color: #222;
}

.track-main {
    padding-top: 0;
}

.main-bar {
    height: 357px;
}

.hscroll {
    height: 13px;
    flex: none;
    display: flex;
}

.ruler-y-end {
    width: 20px;
    background: #545459;
}

.hscroll-track {
    width: 747px;
    background: #3e3f43;
    padding: 3px 0 3px 2px;
}

.hscroll-thumb {
    width: 405px;
    height: 7px;
    background: #636468;
}

.hscroll-corner {
    width: 13px;
    background: #48494e;
}

/* right column */
.props {
    height: 414px;
    flex: none;
}

.title-bar {
    padding-left: 8px;
}

.table-icon {
    width: 13px;
    height: 13px;
    stroke: none;
}

.title {
    margin-left: 8px;
    padding-top: 1px;
    font-size: 11px;
    color: #d0d0d0;
    flex: 1;
}

.menu-icon {
    width: 14px;
    height: 10px;
    margin-right: 8px;
    stroke: #ddd;
}

.prop-body {
    width: 258px;
    flex: none;
    padding-left: 13px;
    overflow: hidden;
    font-size: 11.200px;
}

.two-up {
    display: grid;
    grid-template-columns: 100px 100px;
    gap: 20px;
}

.stubs i {
    display: block;
    height: 5px;
    background: #3a3b3f;
}

.labels {
    height: 16px;
    margin-top: 8px;
    padding-left: 2px;
    line-height: 16px;
    color: #c8c8c8;
}

.px-input {
    height: 25px;
    margin-top: 3px;
    background: #424347;
    color: #66676b;
    display: flex;
    align-items: center;
    justify-content: space-between;
    padding: 0 5px;
}

.carets {
    font-size: 15px;
    line-height: 20px;
}

.apply {
    display: flex;
    align-items: center;
    gap: 7px;
    height: 14px;
    margin-top: 11px;
    color: #c8c8c8;
}

.check {
    width: 12px;
    height: 12px;
    border: 1px solid #6d6e72;
    color: #8a8b8f;
    flex: none;
}

.group-head {
    width: 234px;
    margin: 16px 0 0 -1px;
    height: 23px;
    padding-bottom: 7px;
    line-height: 16px;
    color: #1fb8bf;
    border-bottom: 1px solid #333437;
    display: flex;
    align-items: center;
    justify-content: space-between;
}

.teal-chev {
    color: #1fb8bf;
    width: 12px;
    height: 12px;
    margin-right: 4px;
    stroke-width: 1.4;
}

.apply-row {
    height: 14px;
    margin-top: 5px;
    margin-left: -1px;
    display: flex;
    align-items: center;
    color: #c8c8c8;
}

.apply-row span:first-child {
    width: 87px;
}

.c1 { margin-right: 68px; }
.c2 { margin-right: 23px; }

.side {
    margin-bottom: 6px;
}

.apply-row + .side {
    margin-top: 11px;
}

.side-label {
    height: 16px;
    line-height: 16px;
    margin-left: -1px;
    color: #c8c8c8;
}

.side-row {
    height: 25px;
    margin-top: 3px;
    display: flex;
    align-items: center;
    gap: 6px;
}

.hex {
    width: 100px;
    height: 25px;
    background: #36373a;
    display: flex;
    align-items: center;
    justify-content: space-between;
    padding: 0 4px 0 7px;
    font-size: 11.500px;
    color: #d8d8d8;
}

.hex s {
    text-decoration: none;
    color: #85868a;
}

.dot {
    width: 18px;
    height: 14px;
    background: #dddddd;
    border: 1px solid #8a8a8a;
    border-radius: 4px;
    flex: none;
}

.stepper {
    width: 73px;
    height: 25px;
    background: #36373a;
    display: flex;
    align-items: center;
    justify-content: space-between;
    padding: 0 10px 0 6px;
    color: #d8d8d8;
}

.spin {
    display: flex;
    flex-direction: column;
}

.spin .chev {
    height: 8px;
}

.chev.up {
    transform: scaleY(-1);
}

.line-style {
    width: 30px;
    margin-left: 7px;
    display: flex;
    align-items: center;
    color: #e0e0e0;
}

.line-style i {
    width: 15px;
    height: 2px;
    background: #e0e0e0;
    margin-top: 6px;
}

.line-style b {
    width: 0;
    height: 0;
    border-left: 3.500px solid transparent;
    border-right: 3.500px solid transparent;
    border-top: 4px solid #e0e0e0;
    margin: -6px 0 0 2px;
}

.no-line {
    width: 11px;
    height: 11px;
    stroke-width: 1.600;
    margin: 0 2px;
}

.disabled .hex,
.disabled .stepper {
    background: #424347;
    color: #66676b;
}

.disabled .hex s {
    color: #66676b;
}

.disabled .dot {
    background: transparent;
    border-color: #6d6e72;
}

.disabled .spin .chev {
    color: #66676b;
}

.shadow-head {
    margin-top: 14px;
}

.props-bar {
    height: 137px;
    margin-top: 245px;
}

.layers-tabs {
    height: 33px;
}

.layers {
    flex: 1;
}

.layers-title {
    height: 27px;
    border-bottom-width: 1px;
    padding-right: 5px;
}

.small-arrow {
    width: 14px;
    height: 14px;
    margin-right: 4px;
    color: #d0d0d0;
}

.layer-list {
    list-style: none;
    margin: 0;
    padding: 0;
    width: 258px;
    flex: none;
    overflow: hidden;
}

.layer-list li {
    height: 30px;
    display: flex;
    align-items: center;
    padding: 0 0 1px 9px;
    margin: 0;
    color: #c8c8c8;
    font-size: 11.200px;
    position: relative;
}

.layer-list li::after {
    content: "";
    position: absolute;
    left: 5px;
    width: 249px;
    bottom: 0;
    height: 1px;
    background: #333437;
}

.layer-list li.picked {
    background: #3c3d41;
    color: #e8e8e8;
}

.eye {
    width: 15px;
    height: 12px;
    color: #e4e4e4;
    margin-top: -3px;
}

.box {
    width: 10px;
    height: 10px;
    margin: 0 0 0 9px;
    border: 1px solid #5f6064;
    flex: none;
}

.lock {
    width: 10px;
    height: 10px;
    margin: -1px 0 0 9px;
    color: #f0f0f0;
    flex: none;
}

.exp {
    width: 8px;
    height: 10px;
    margin: 0 9px 0 8px;
    flex: none;
}

.exp.arrow {
    color: #1fb8bf;
    stroke-width: 1.600;
}

.layers-bar {
    height: 263px;
    margin-top: 109px;
}

/* overlays */
.collapse {
    position: absolute;
    top: 436px;
    width: 10px;
    height: 44px;
    background: #3e3f43;
    display: flex;
    align-items: center;
}

.collapse-left {
    left: 207px;
}

.collapse-right {
    left: 997px;
}

.chev-side {
    width: 10px;
    height: 10px;
    color: #a0a0a0;
}

.comment {
    position: absolute;
    left: 1021px;
    top: 427px;
    width: 231px;
    height: 79px;
    padding: 9px 16px 0;
    background: #ececec;
    border: 2px solid #f00000;
    border-radius: 20px;
    color: #222;
    font-size: 16px;
    line-height: 19.500px;
    text-align: center;
}
```
